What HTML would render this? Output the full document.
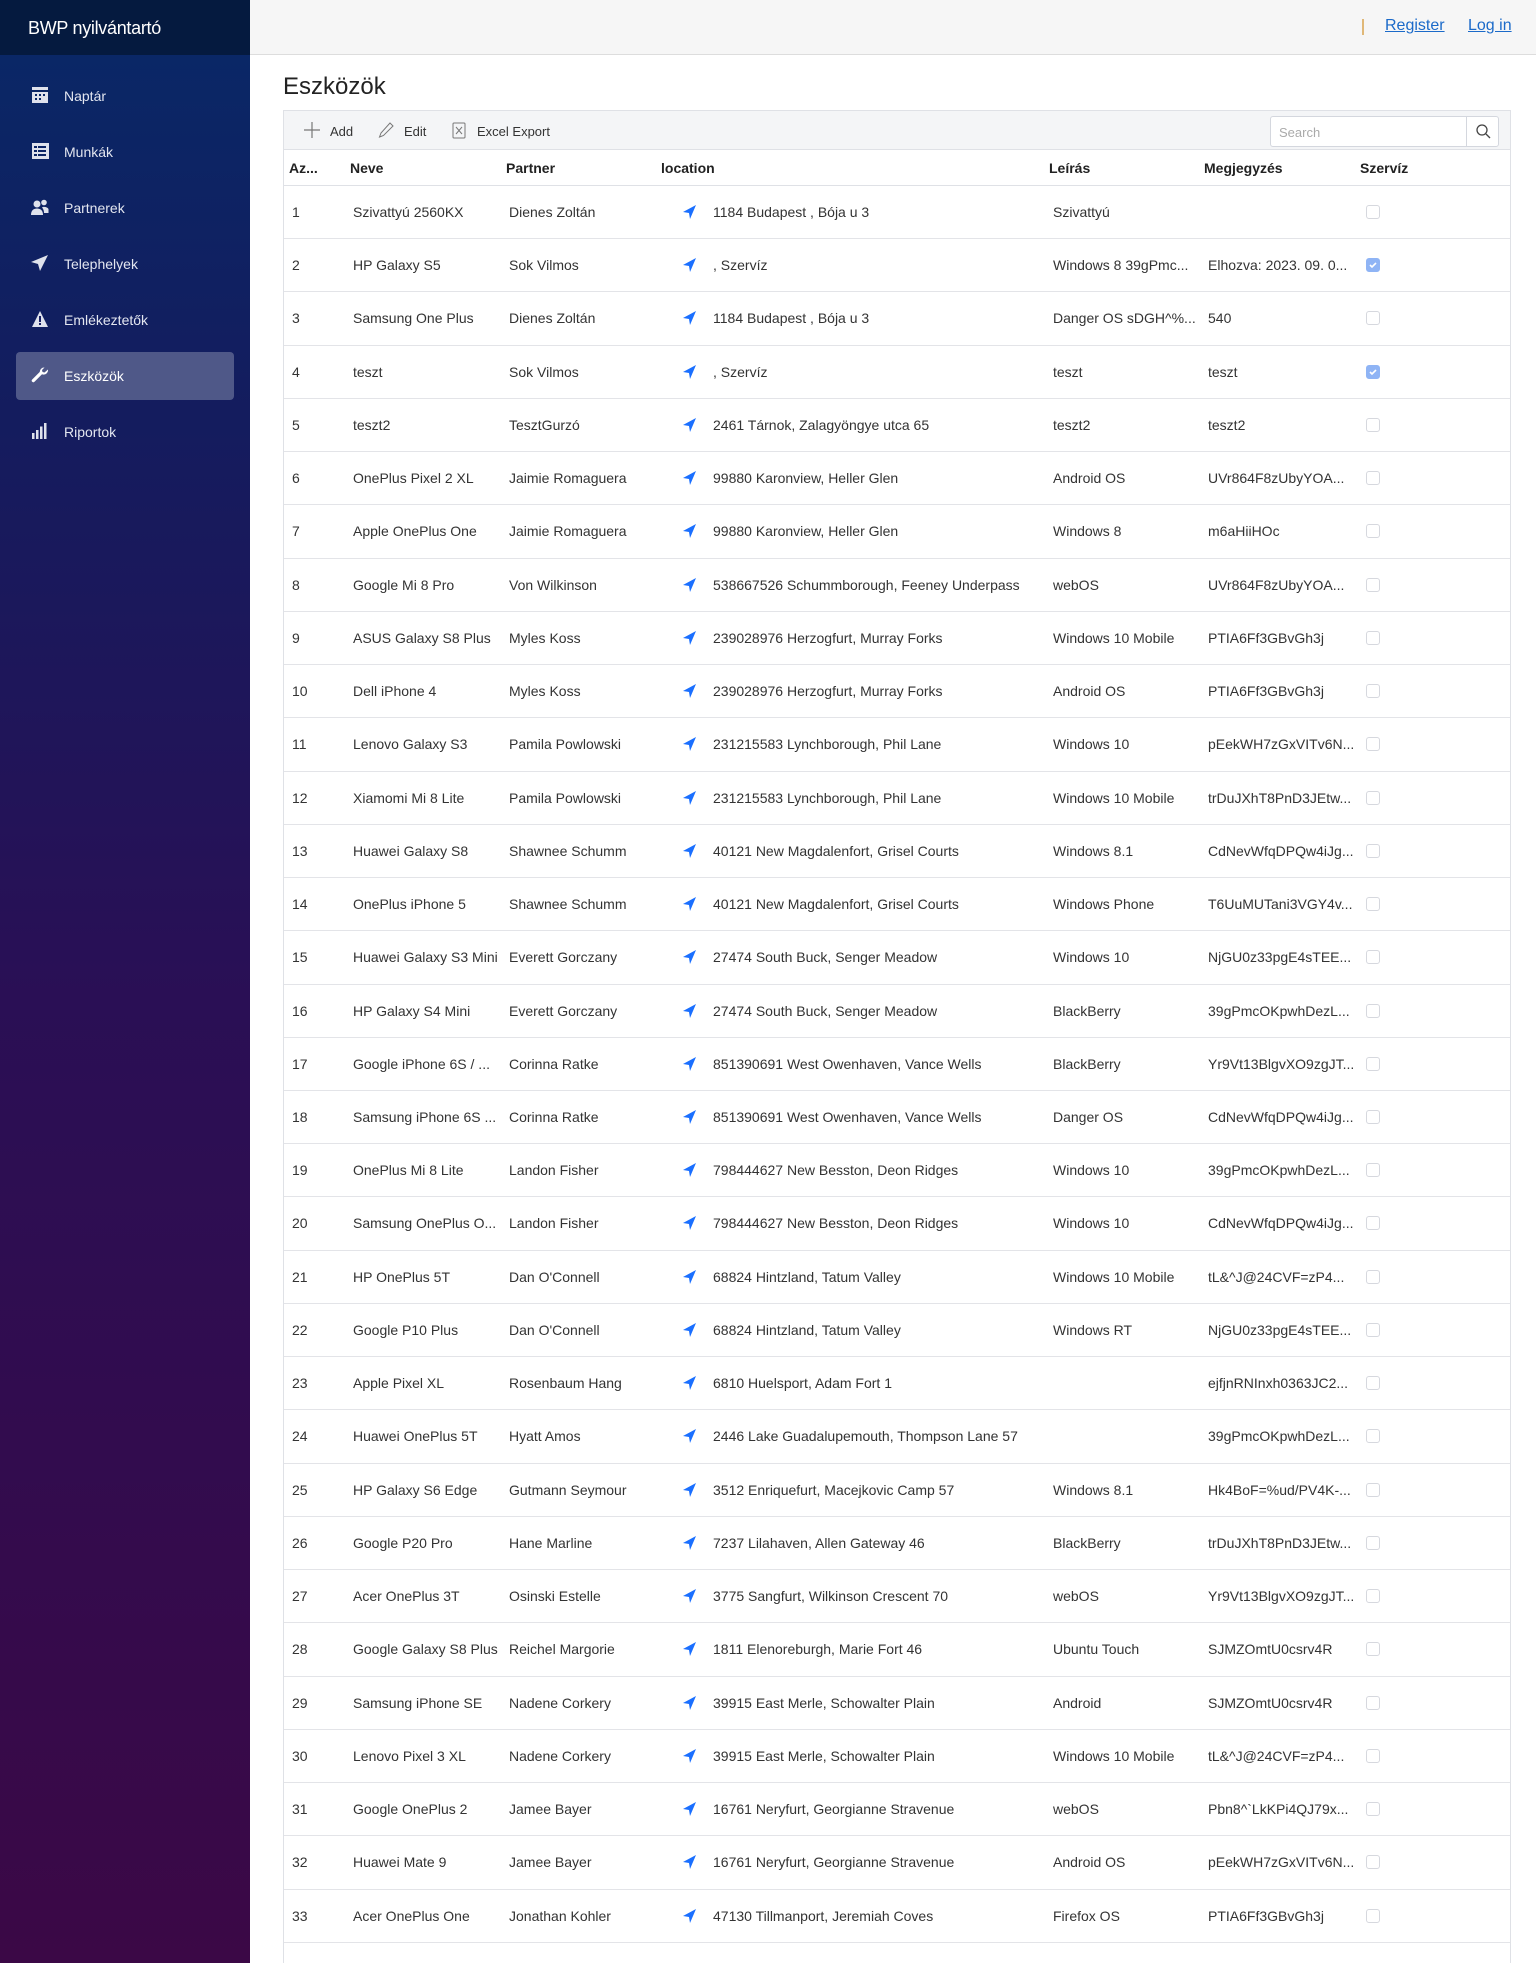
<!DOCTYPE html>
<html style="overflow:hidden"><head><meta charset="utf-8"><style>
*{box-sizing:border-box;margin:0;padding:0}
html,body{overflow:hidden}
body{width:1536px;height:1963px;font-family:"Liberation Sans",sans-serif;background:#fff;position:relative}
.side{position:absolute;left:0;top:0;width:250px;height:1963px;background:linear-gradient(180deg,#0a2766 55px,#141c5e 420px,#2a0f55 1000px,#3b0846 1963px)}
.brand{height:55px;background:#051a3f;color:#fff;font-size:18px;padding:18px 0 0 28px;letter-spacing:-0.3px}
.nav{position:absolute;left:16px;width:218px;height:48px;color:#e3e6f0;font-size:14px;line-height:48px;padding-left:48px;border-radius:4px}
.nav.act{background:#4f5888;color:#fff}
.nav svg{position:absolute;left:15px;top:15px}
.top{position:absolute;left:250px;top:0;right:0;height:55px;background:#f6f6f6;border-bottom:1px solid #ddd}
.top .bar{position:absolute;left:1112px;top:19px;width:2px;height:16px;background:#e0b878}
.top a{position:absolute;top:17px;color:#1b6ac9;font-size:16px;text-decoration:underline}
h1{position:absolute;left:283px;top:73px;font-size:24px;font-weight:normal;color:#222}
.grid{position:absolute;left:283px;top:110px;width:1228px;height:1853px;border:1px solid #dfe1e6;border-bottom:none;overflow:hidden}
.tb{height:39px;background:#f4f5f7;border-bottom:1px solid #dfe1e6;position:relative;font-size:13px;color:#333}
.tb span{position:absolute;top:13px}
.srch{position:absolute;left:986px;top:5px;width:229px;height:31px;border:1px solid #d4d7de;border-radius:3px;background:#fff}
.srch i{position:absolute;left:8px;top:8px;font-style:normal;color:#aaa;font-size:13px}
.srch b{position:absolute;right:0;top:0;width:32px;height:29px;border-left:1px solid #d4d7de}
.hd{height:36px;border-bottom:1px solid #dfe1e6;position:relative;font-size:14px;font-weight:bold;color:#222}
.hd span{position:absolute;top:10px}
.r{height:53.24px;border-bottom:1px solid #e3e4e8;position:relative;font-size:14px;color:#333}
.r span{position:absolute;top:18px;white-space:nowrap}
.r svg.l{position:absolute;left:399px;top:19px}
.cb{position:absolute;left:1082px;top:19px;width:14px;height:14px;border:1px solid #d6d8de;border-radius:3px;background:#fff}
.cb.on{background:#8fb4f5;border-color:#8fb4f5}
</style></head><body>
<div class="side">
<div class="brand">BWP nyilvántartó</div>
<div class="nav" style="top:72px"><svg width="18" height="16" viewBox="0 0 18 16"><rect x="1" y="0" width="16" height="3" fill="#dfe2ec"/><rect x="1" y="5" width="16" height="11" fill="#dfe2ec"/><g fill="#0b2766"><rect x="4" y="7" width="2" height="2"/><rect x="8" y="7" width="2" height="2"/><rect x="12" y="7" width="2" height="2"/><rect x="4" y="11" width="2" height="2"/><rect x="8" y="11" width="2" height="2"/></g></svg>Naptár</div>
<div class="nav" style="top:128px"><svg width="18" height="16" viewBox="0 0 18 16"><rect x="1" y="0" width="17" height="16" fill="#dfe2ec"/><g fill="#0c2464"><rect x="3" y="3" width="3" height="2"/><rect x="7" y="3" width="8" height="2"/><rect x="3" y="7" width="3" height="2"/><rect x="7" y="7" width="8" height="2"/><rect x="3" y="11" width="3" height="2"/><rect x="7" y="11" width="8" height="2"/></g></svg>Munkák</div>
<div class="nav" style="top:184px"><svg width="18" height="16" viewBox="0 0 18 16" fill="#dfe2ec"><circle cx="6" cy="5" r="3.5"/><path d="M0 16c0-5 3-6.5 6-6.5s6 1.5 6 6.5z"/><circle cx="13" cy="3.5" r="2.8"/><path d="M11 8.5c1-1 5-1 6.5 1.5v4h-4.5c0-2-.5-4-2-5.5z"/></svg>Partnerek</div>
<div class="nav" style="top:240px"><svg width="18" height="16" viewBox="0 0 18 16"><path d="M17 0L0 7l7 2 2 7z" fill="#dfe2ec"/></svg>Telephelyek</div>
<div class="nav" style="top:296px"><svg width="18" height="16" viewBox="0 0 18 16"><path d="M9 0L17 16H1z" fill="#dfe2ec"/><rect x="8" y="5" width="2" height="6" fill="#181f62"/><rect x="8" y="12" width="2" height="2" fill="#181f62"/></svg>Emlékeztetők</div>
<div class="nav act" style="top:352px"><svg width="18" height="16" viewBox="0 0 18 16"><path d="M17 2.5a4.5 4.5 0 0 1-6 4.8L3.5 14.8a1.6 1.6 0 0 1-2.3-2.3L8.7 5A4.5 4.5 0 0 1 13.5.5l-2.5 2.5.5 2 2 .5z" fill="#fff"/></svg>Eszközök</div>
<div class="nav" style="top:408px"><svg width="18" height="16" viewBox="0 0 18 16" fill="#dfe2ec"><rect x="1" y="10" width="2.5" height="6"/><rect x="5" y="7" width="2.5" height="9"/><rect x="9" y="3.5" width="2.5" height="12.5"/><rect x="13" y="0" width="2.5" height="16"/></svg>Riportok</div>
</div>
<div class="top"><div class="bar"></div><a style="left:1135px">Register</a><a style="left:1218px">Log in</a></div>
<h1>Eszközök</h1>
<div class="grid">
<div class="tb">
<svg style="position:absolute;left:20px;top:11px" width="16" height="16"><path d="M8 0v16M0 8h16" stroke="#777" stroke-width="1.2"/></svg><span style="left:46px">Add</span>
<svg style="position:absolute;left:94px;top:11px" width="16" height="16"><path d="M12 1l3 3-9.5 9.5L1.5 15l1.5-4z" fill="none" stroke="#777"/></svg><span style="left:120px">Edit</span>
<svg style="position:absolute;left:168px;top:11px" width="14" height="17"><rect x="1" y="1" width="12" height="15" rx="1" fill="none" stroke="#777"/><path d="M4 5l6 7M10 5l-6 7" stroke="#777"/></svg><span style="left:193px">Excel Export</span>
<div class="srch"><i>Search</i><b><svg style="position:absolute;left:9px;top:7px" width="15" height="15"><circle cx="6" cy="6" r="5" fill="none" stroke="#444" stroke-width="1.3"/><path d="M10 10l4 4" stroke="#444" stroke-width="1.3"/></svg></b></div>
</div>
<div class="hd"><span style="left:5px">Az...</span><span style="left:66px">Neve</span><span style="left:222px">Partner</span><span style="left:377px">location</span><span style="left:765px">Leírás</span><span style="left:920px">Megjegyzés</span><span style="left:1076px">Szervíz</span></div>
<div id="rows">
<div class="r"><span style="left:8px">1</span><span style="left:69px">Szivattyú 2560KX</span><span style="left:225px">Dienes Zoltán</span><svg class="l" width="14" height="14"><path d="M13 0L0 7l6 1 1 6z" fill="#1a6fff"/></svg><span style="left:429px">1184 Budapest , Bója u 3</span><span style="left:769px">Szivattyú</span><span style="left:924px"></span><div class="cb"></div></div>
<div class="r"><span style="left:8px">2</span><span style="left:69px">HP Galaxy S5</span><span style="left:225px">Sok Vilmos</span><svg class="l" width="14" height="14"><path d="M13 0L0 7l6 1 1 6z" fill="#1a6fff"/></svg><span style="left:429px">, Szervíz</span><span style="left:769px">Windows 8 39gPmc...</span><span style="left:924px">Elhozva: 2023. 09. 0...</span><div class="cb on"><svg width="12" height="12" style="position:absolute;left:0;top:0"><path d="M3 6l2 2 4-4" stroke="#fff" stroke-width="1.6" fill="none"/></svg></div></div>
<div class="r"><span style="left:8px">3</span><span style="left:69px">Samsung One Plus</span><span style="left:225px">Dienes Zoltán</span><svg class="l" width="14" height="14"><path d="M13 0L0 7l6 1 1 6z" fill="#1a6fff"/></svg><span style="left:429px">1184 Budapest , Bója u 3</span><span style="left:769px">Danger OS sDGH^%...</span><span style="left:924px">540</span><div class="cb"></div></div>
<div class="r"><span style="left:8px">4</span><span style="left:69px">teszt</span><span style="left:225px">Sok Vilmos</span><svg class="l" width="14" height="14"><path d="M13 0L0 7l6 1 1 6z" fill="#1a6fff"/></svg><span style="left:429px">, Szervíz</span><span style="left:769px">teszt</span><span style="left:924px">teszt</span><div class="cb on"><svg width="12" height="12" style="position:absolute;left:0;top:0"><path d="M3 6l2 2 4-4" stroke="#fff" stroke-width="1.6" fill="none"/></svg></div></div>
<div class="r"><span style="left:8px">5</span><span style="left:69px">teszt2</span><span style="left:225px">TesztGurzó</span><svg class="l" width="14" height="14"><path d="M13 0L0 7l6 1 1 6z" fill="#1a6fff"/></svg><span style="left:429px">2461 Tárnok, Zalagyöngye utca 65</span><span style="left:769px">teszt2</span><span style="left:924px">teszt2</span><div class="cb"></div></div>
<div class="r"><span style="left:8px">6</span><span style="left:69px">OnePlus Pixel 2 XL</span><span style="left:225px">Jaimie Romaguera</span><svg class="l" width="14" height="14"><path d="M13 0L0 7l6 1 1 6z" fill="#1a6fff"/></svg><span style="left:429px">99880 Karonview, Heller Glen</span><span style="left:769px">Android OS</span><span style="left:924px">UVr864F8zUbyYOA...</span><div class="cb"></div></div>
<div class="r"><span style="left:8px">7</span><span style="left:69px">Apple OnePlus One</span><span style="left:225px">Jaimie Romaguera</span><svg class="l" width="14" height="14"><path d="M13 0L0 7l6 1 1 6z" fill="#1a6fff"/></svg><span style="left:429px">99880 Karonview, Heller Glen</span><span style="left:769px">Windows 8</span><span style="left:924px">m6aHiiHOc</span><div class="cb"></div></div>
<div class="r"><span style="left:8px">8</span><span style="left:69px">Google Mi 8 Pro</span><span style="left:225px">Von Wilkinson</span><svg class="l" width="14" height="14"><path d="M13 0L0 7l6 1 1 6z" fill="#1a6fff"/></svg><span style="left:429px">538667526 Schummborough, Feeney Underpass</span><span style="left:769px">webOS</span><span style="left:924px">UVr864F8zUbyYOA...</span><div class="cb"></div></div>
<div class="r"><span style="left:8px">9</span><span style="left:69px">ASUS Galaxy S8 Plus</span><span style="left:225px">Myles Koss</span><svg class="l" width="14" height="14"><path d="M13 0L0 7l6 1 1 6z" fill="#1a6fff"/></svg><span style="left:429px">239028976 Herzogfurt, Murray Forks</span><span style="left:769px">Windows 10 Mobile</span><span style="left:924px">PTIA6Ff3GBvGh3j</span><div class="cb"></div></div>
<div class="r"><span style="left:8px">10</span><span style="left:69px">Dell iPhone 4</span><span style="left:225px">Myles Koss</span><svg class="l" width="14" height="14"><path d="M13 0L0 7l6 1 1 6z" fill="#1a6fff"/></svg><span style="left:429px">239028976 Herzogfurt, Murray Forks</span><span style="left:769px">Android OS</span><span style="left:924px">PTIA6Ff3GBvGh3j</span><div class="cb"></div></div>
<div class="r"><span style="left:8px">11</span><span style="left:69px">Lenovo Galaxy S3</span><span style="left:225px">Pamila Powlowski</span><svg class="l" width="14" height="14"><path d="M13 0L0 7l6 1 1 6z" fill="#1a6fff"/></svg><span style="left:429px">231215583 Lynchborough, Phil Lane</span><span style="left:769px">Windows 10</span><span style="left:924px">pEekWH7zGxVITv6N...</span><div class="cb"></div></div>
<div class="r"><span style="left:8px">12</span><span style="left:69px">Xiamomi Mi 8 Lite</span><span style="left:225px">Pamila Powlowski</span><svg class="l" width="14" height="14"><path d="M13 0L0 7l6 1 1 6z" fill="#1a6fff"/></svg><span style="left:429px">231215583 Lynchborough, Phil Lane</span><span style="left:769px">Windows 10 Mobile</span><span style="left:924px">trDuJXhT8PnD3JEtw...</span><div class="cb"></div></div>
<div class="r"><span style="left:8px">13</span><span style="left:69px">Huawei Galaxy S8</span><span style="left:225px">Shawnee Schumm</span><svg class="l" width="14" height="14"><path d="M13 0L0 7l6 1 1 6z" fill="#1a6fff"/></svg><span style="left:429px">40121 New Magdalenfort, Grisel Courts</span><span style="left:769px">Windows 8.1</span><span style="left:924px">CdNevWfqDPQw4iJg...</span><div class="cb"></div></div>
<div class="r"><span style="left:8px">14</span><span style="left:69px">OnePlus iPhone 5</span><span style="left:225px">Shawnee Schumm</span><svg class="l" width="14" height="14"><path d="M13 0L0 7l6 1 1 6z" fill="#1a6fff"/></svg><span style="left:429px">40121 New Magdalenfort, Grisel Courts</span><span style="left:769px">Windows Phone</span><span style="left:924px">T6UuMUTani3VGY4v...</span><div class="cb"></div></div>
<div class="r"><span style="left:8px">15</span><span style="left:69px">Huawei Galaxy S3 Mini</span><span style="left:225px">Everett Gorczany</span><svg class="l" width="14" height="14"><path d="M13 0L0 7l6 1 1 6z" fill="#1a6fff"/></svg><span style="left:429px">27474 South Buck, Senger Meadow</span><span style="left:769px">Windows 10</span><span style="left:924px">NjGU0z33pgE4sTEE...</span><div class="cb"></div></div>
<div class="r"><span style="left:8px">16</span><span style="left:69px">HP Galaxy S4 Mini</span><span style="left:225px">Everett Gorczany</span><svg class="l" width="14" height="14"><path d="M13 0L0 7l6 1 1 6z" fill="#1a6fff"/></svg><span style="left:429px">27474 South Buck, Senger Meadow</span><span style="left:769px">BlackBerry</span><span style="left:924px">39gPmcOKpwhDezL...</span><div class="cb"></div></div>
<div class="r"><span style="left:8px">17</span><span style="left:69px">Google iPhone 6S / ...</span><span style="left:225px">Corinna Ratke</span><svg class="l" width="14" height="14"><path d="M13 0L0 7l6 1 1 6z" fill="#1a6fff"/></svg><span style="left:429px">851390691 West Owenhaven, Vance Wells</span><span style="left:769px">BlackBerry</span><span style="left:924px">Yr9Vt13BlgvXO9zgJT...</span><div class="cb"></div></div>
<div class="r"><span style="left:8px">18</span><span style="left:69px">Samsung iPhone 6S ...</span><span style="left:225px">Corinna Ratke</span><svg class="l" width="14" height="14"><path d="M13 0L0 7l6 1 1 6z" fill="#1a6fff"/></svg><span style="left:429px">851390691 West Owenhaven, Vance Wells</span><span style="left:769px">Danger OS</span><span style="left:924px">CdNevWfqDPQw4iJg...</span><div class="cb"></div></div>
<div class="r"><span style="left:8px">19</span><span style="left:69px">OnePlus Mi 8 Lite</span><span style="left:225px">Landon Fisher</span><svg class="l" width="14" height="14"><path d="M13 0L0 7l6 1 1 6z" fill="#1a6fff"/></svg><span style="left:429px">798444627 New Besston, Deon Ridges</span><span style="left:769px">Windows 10</span><span style="left:924px">39gPmcOKpwhDezL...</span><div class="cb"></div></div>
<div class="r"><span style="left:8px">20</span><span style="left:69px">Samsung OnePlus O...</span><span style="left:225px">Landon Fisher</span><svg class="l" width="14" height="14"><path d="M13 0L0 7l6 1 1 6z" fill="#1a6fff"/></svg><span style="left:429px">798444627 New Besston, Deon Ridges</span><span style="left:769px">Windows 10</span><span style="left:924px">CdNevWfqDPQw4iJg...</span><div class="cb"></div></div>
<div class="r"><span style="left:8px">21</span><span style="left:69px">HP OnePlus 5T</span><span style="left:225px">Dan O'Connell</span><svg class="l" width="14" height="14"><path d="M13 0L0 7l6 1 1 6z" fill="#1a6fff"/></svg><span style="left:429px">68824 Hintzland, Tatum Valley</span><span style="left:769px">Windows 10 Mobile</span><span style="left:924px">tL&amp;^J@24CVF=zP4...</span><div class="cb"></div></div>
<div class="r"><span style="left:8px">22</span><span style="left:69px">Google P10 Plus</span><span style="left:225px">Dan O'Connell</span><svg class="l" width="14" height="14"><path d="M13 0L0 7l6 1 1 6z" fill="#1a6fff"/></svg><span style="left:429px">68824 Hintzland, Tatum Valley</span><span style="left:769px">Windows RT</span><span style="left:924px">NjGU0z33pgE4sTEE...</span><div class="cb"></div></div>
<div class="r"><span style="left:8px">23</span><span style="left:69px">Apple Pixel XL</span><span style="left:225px">Rosenbaum Hang</span><svg class="l" width="14" height="14"><path d="M13 0L0 7l6 1 1 6z" fill="#1a6fff"/></svg><span style="left:429px">6810 Huelsport, Adam Fort 1</span><span style="left:769px"></span><span style="left:924px">ejfjnRNInxh0363JC2...</span><div class="cb"></div></div>
<div class="r"><span style="left:8px">24</span><span style="left:69px">Huawei OnePlus 5T</span><span style="left:225px">Hyatt Amos</span><svg class="l" width="14" height="14"><path d="M13 0L0 7l6 1 1 6z" fill="#1a6fff"/></svg><span style="left:429px">2446 Lake Guadalupemouth, Thompson Lane 57</span><span style="left:769px"></span><span style="left:924px">39gPmcOKpwhDezL...</span><div class="cb"></div></div>
<div class="r"><span style="left:8px">25</span><span style="left:69px">HP Galaxy S6 Edge</span><span style="left:225px">Gutmann Seymour</span><svg class="l" width="14" height="14"><path d="M13 0L0 7l6 1 1 6z" fill="#1a6fff"/></svg><span style="left:429px">3512 Enriquefurt, Macejkovic Camp 57</span><span style="left:769px">Windows 8.1</span><span style="left:924px">Hk4BoF=%ud/PV4K-...</span><div class="cb"></div></div>
<div class="r"><span style="left:8px">26</span><span style="left:69px">Google P20 Pro</span><span style="left:225px">Hane Marline</span><svg class="l" width="14" height="14"><path d="M13 0L0 7l6 1 1 6z" fill="#1a6fff"/></svg><span style="left:429px">7237 Lilahaven, Allen Gateway 46</span><span style="left:769px">BlackBerry</span><span style="left:924px">trDuJXhT8PnD3JEtw...</span><div class="cb"></div></div>
<div class="r"><span style="left:8px">27</span><span style="left:69px">Acer OnePlus 3T</span><span style="left:225px">Osinski Estelle</span><svg class="l" width="14" height="14"><path d="M13 0L0 7l6 1 1 6z" fill="#1a6fff"/></svg><span style="left:429px">3775 Sangfurt, Wilkinson Crescent 70</span><span style="left:769px">webOS</span><span style="left:924px">Yr9Vt13BlgvXO9zgJT...</span><div class="cb"></div></div>
<div class="r"><span style="left:8px">28</span><span style="left:69px">Google Galaxy S8 Plus</span><span style="left:225px">Reichel Margorie</span><svg class="l" width="14" height="14"><path d="M13 0L0 7l6 1 1 6z" fill="#1a6fff"/></svg><span style="left:429px">1811 Elenoreburgh, Marie Fort 46</span><span style="left:769px">Ubuntu Touch</span><span style="left:924px">SJMZOmtU0csrv4R</span><div class="cb"></div></div>
<div class="r"><span style="left:8px">29</span><span style="left:69px">Samsung iPhone SE</span><span style="left:225px">Nadene Corkery</span><svg class="l" width="14" height="14"><path d="M13 0L0 7l6 1 1 6z" fill="#1a6fff"/></svg><span style="left:429px">39915 East Merle, Schowalter Plain</span><span style="left:769px">Android</span><span style="left:924px">SJMZOmtU0csrv4R</span><div class="cb"></div></div>
<div class="r"><span style="left:8px">30</span><span style="left:69px">Lenovo Pixel 3 XL</span><span style="left:225px">Nadene Corkery</span><svg class="l" width="14" height="14"><path d="M13 0L0 7l6 1 1 6z" fill="#1a6fff"/></svg><span style="left:429px">39915 East Merle, Schowalter Plain</span><span style="left:769px">Windows 10 Mobile</span><span style="left:924px">tL&amp;^J@24CVF=zP4...</span><div class="cb"></div></div>
<div class="r"><span style="left:8px">31</span><span style="left:69px">Google OnePlus 2</span><span style="left:225px">Jamee Bayer</span><svg class="l" width="14" height="14"><path d="M13 0L0 7l6 1 1 6z" fill="#1a6fff"/></svg><span style="left:429px">16761 Neryfurt, Georgianne Stravenue</span><span style="left:769px">webOS</span><span style="left:924px">Pbn8^`LkKPi4QJ79x...</span><div class="cb"></div></div>
<div class="r"><span style="left:8px">32</span><span style="left:69px">Huawei Mate 9</span><span style="left:225px">Jamee Bayer</span><svg class="l" width="14" height="14"><path d="M13 0L0 7l6 1 1 6z" fill="#1a6fff"/></svg><span style="left:429px">16761 Neryfurt, Georgianne Stravenue</span><span style="left:769px">Android OS</span><span style="left:924px">pEekWH7zGxVITv6N...</span><div class="cb"></div></div>
<div class="r"><span style="left:8px">33</span><span style="left:69px">Acer OnePlus One</span><span style="left:225px">Jonathan Kohler</span><svg class="l" width="14" height="14"><path d="M13 0L0 7l6 1 1 6z" fill="#1a6fff"/></svg><span style="left:429px">47130 Tillmanport, Jeremiah Coves</span><span style="left:769px">Firefox OS</span><span style="left:924px">PTIA6Ff3GBvGh3j</span><div class="cb"></div></div>
<div class="r"><svg class="l" width="14" height="14" style="top:44px"><path d="M13 0L0 7l6 1 1 6z" fill="#1a6fff"/></svg></div>
</div>
</div>
</body></html>
